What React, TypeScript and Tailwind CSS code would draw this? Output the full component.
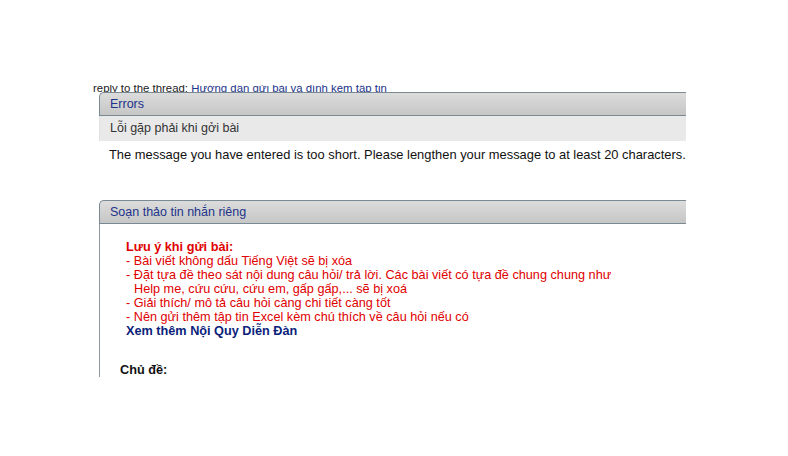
const font = { fontFamily: '"Liberation Sans", Arial, sans-serif' };

function Header({ title }: { title: string }) {
  return (
    <div className="flex h-[24px] items-center rounded-tl-[5px] border-y border-l border-[#7a8a94] bg-gradient-to-b from-[#dcdcdc] to-[#c6c6c6] pl-[10px] text-[12.5px] text-[#22338a]">
      {title}
    </div>
  );
}

export default function App() {
  return (
    <div className="h-[456px] w-[788px] bg-white" style={font}>
      <div className="pt-[85px] pl-[93px]">
        {/* clipped breadcrumb line, only the bottom of the glyphs is visible */}
        <div className="flex h-[7px] items-end overflow-hidden">
          <div className="-mb-[3px] whitespace-nowrap text-[11.4px] leading-[14px] text-[#222]">
            reply to the thread: <span className="text-[#22338a]">Hướng dẫn gửi bài và đính kèm tập tin</span>
          </div>
        </div>

        <div className="ml-[6px] w-[587px]">
          <Header title="Errors" />
          <div className="flex h-[25px] items-center border-l border-[#e0e0e0] bg-[#e9e9e9] pl-[10px] text-[12.5px] text-[#333]">
            Lỗi gặp phải khi gởi bài
          </div>
          <div className="h-[59px] whitespace-nowrap pl-[10px] pt-[6px] text-[12.9px] leading-[16px] text-[#111]">
            The message you have entered is too short. Please lengthen your message to at least 20 characters.
          </div>
        </div>

        <div className="ml-[6px] w-[587px]">
          <Header title="Soạn thảo tin nhắn riêng" />
          <div className="h-[153px] border-l border-[#8a98a2] pl-[26px] pt-[16px] text-[12.7px] leading-[14px]">
            <div className="font-bold text-[#e00000]">Lưu ý khi gửi bài:</div>
            <div className="text-[#e00000]">
              <div>- Bài viết không dấu Tiếng Việt sẽ bị xóa</div>
              <div>- Đặt tựa đề theo sát nội dung câu hỏi/ trả lời. Các bài viết có tựa đề chung chung như</div>
              <div className="pl-[8px]">Help me, cứu cứu, cứu em, gấp gấp,... sẽ bị xoá</div>
              <div>- Giải thích/ mô tả câu hỏi càng chi tiết càng tốt</div>
              <div>- Nên gửi thêm tập tin Excel kèm chú thích về câu hỏi nếu có</div>
            </div>
            <div className="font-bold text-[#0b1e7a]">Xem thêm Nội Quy Diễn Đàn</div>
            <div className="-ml-[6px] mt-[25px] font-bold text-[#111]">Chủ đề:</div>
          </div>
        </div>
      </div>
    </div>
  );
}
